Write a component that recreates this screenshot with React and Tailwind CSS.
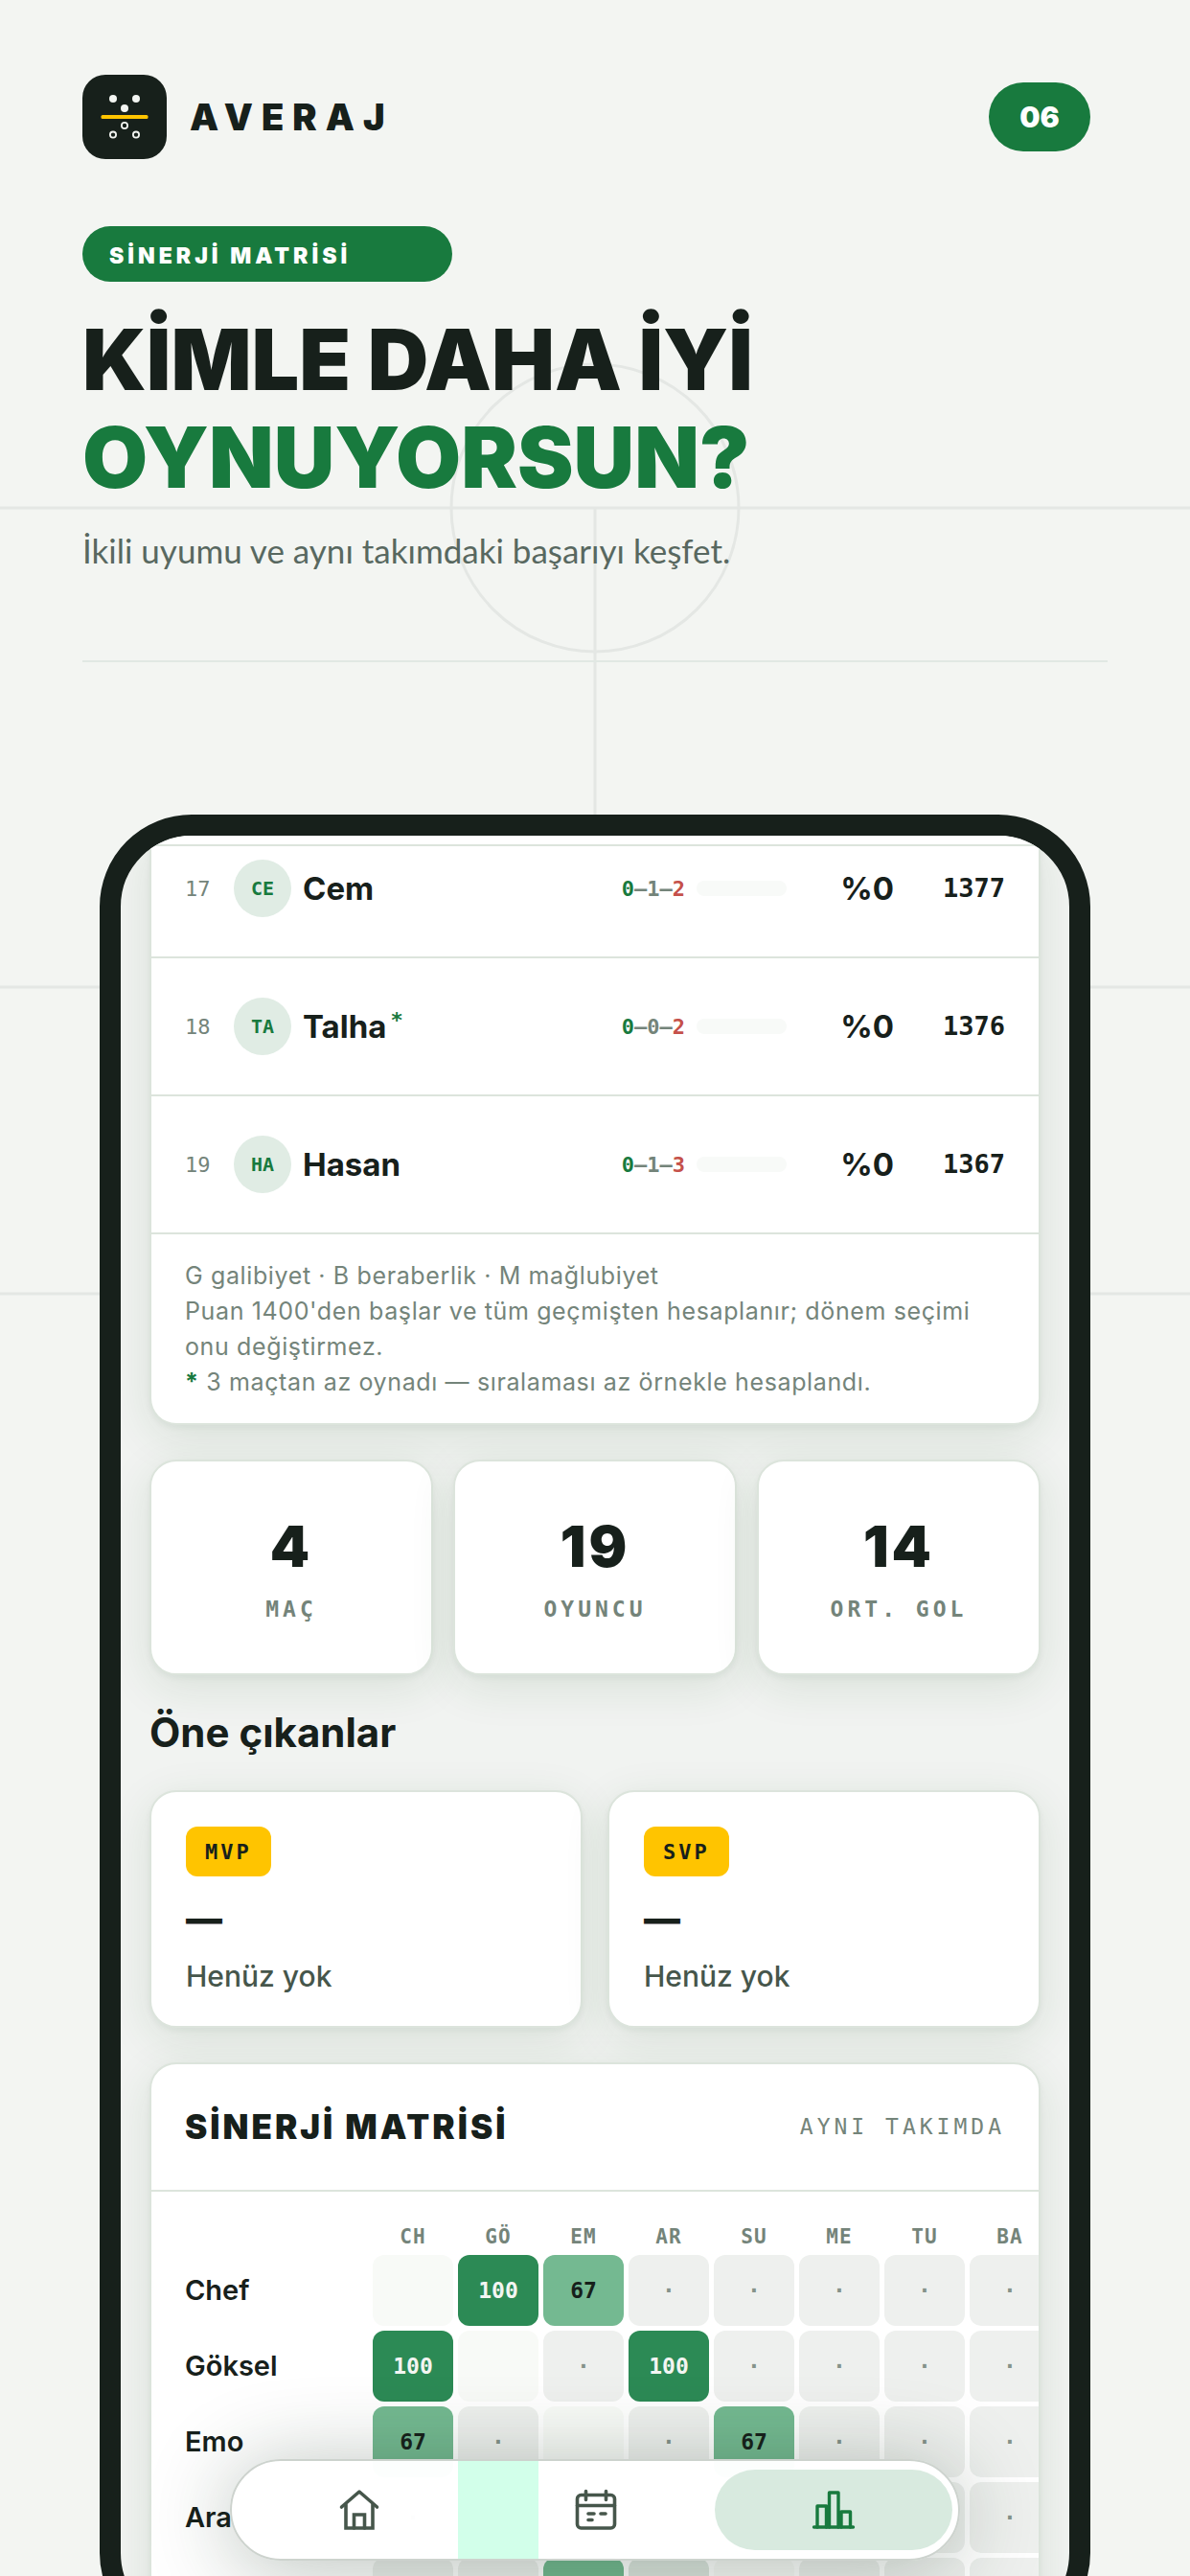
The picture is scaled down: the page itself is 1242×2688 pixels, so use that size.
import React, { useState } from 'react';
import { clsx } from 'clsx';

const players = [
  { rank: 17, code: 'CE', name: 'Cem', record: [0, 1, 2], rate: '%0', points: 1377 },
  { rank: 18, code: 'TA', name: 'Talha', few: true, record: [0, 0, 2], rate: '%0', points: 1376 },
  { rank: 19, code: 'HA', name: 'Hasan', record: [0, 1, 3], rate: '%0', points: 1367 },
];

const stats = [
  { value: '4', label: 'MAÇ' },
  { value: '19', label: 'OYUNCU' },
  { value: '14', label: 'ORT. GOL' },
];

const columns = ['CH', 'GÖ', 'EM', 'AR', 'SU', 'ME', 'TU', 'BA'];

// null = same player, 0 = never played together
const matrix = [
  { name: 'Chef', cells: [null, 100, 67, 0, 0, 0, 0, 0] },
  { name: 'Göksel', cells: [100, null, 0, 100, 0, 0, 0, 0] },
  { name: 'Emo', cells: [67, 0, null, 0, 67, 0, 0, 0] },
  { name: 'Ara', cells: [0, 100, 0, null, 0, 0, 0, 0] },
];

// tones of the row that only peeks out under the tab bar
const peekTones = [
  'bg-[#eef0ee]',
  'bg-[#eef0ee]',
  'bg-[#74b991]',
  'bg-[#dde5df]',
  'bg-[#f8faf7]',
  'bg-[#eef0ee]',
  'bg-[#eef0ee]',
  'bg-[#eef0ee]',
];

const mono = "font-['DejaVu_Sans_Mono',monospace]";
const card =
  'rounded-[28px] border-2 border-[#dce4dc] bg-white shadow-[0_3px_6px_rgba(23,60,30,0.05),0_12px_48px_rgba(23,80,30,0.11)]';

function PitchLines() {
  return (
    <svg className="absolute inset-0 h-full w-full" fill="none" stroke="#e4e7e4" strokeWidth="3" aria-hidden="true">
      <line x1="0" y1="530" x2="100%" y2="530" />
      <line x1="0" y1="1030" x2="100%" y2="1030" />
      <line x1="0" y1="1350" x2="100%" y2="1350" />
      <line x1="50%" y1="530" x2="50%" y2="1350" />
      <circle cx="50%" cy="530" r="150" />
    </svg>
  );
}

function Logo() {
  return (
    <svg viewBox="0 0 88 88" className="h-22 w-22" aria-hidden="true">
      <rect width="88" height="88" rx="24" fill="#17201b" />
      <g fill="#f3f5f2">
        <circle cx="32" cy="25" r="4" />
        <circle cx="56" cy="25" r="4" />
        <circle cx="44" cy="35" r="4" />
      </g>
      <rect x="19.5" y="42" width="49" height="4" rx="1.5" fill="#ffc400" />
      <g fill="none" stroke="#f3f5f2" strokeWidth="1.8">
        <circle cx="44" cy="53" r="3.1" />
        <circle cx="32" cy="62.6" r="3.1" />
        <circle cx="56" cy="62.6" r="3.1" />
      </g>
    </svg>
  );
}

function HomeIcon() {
  return (
    <svg viewBox="0 0 48 48" className="h-12 w-12" fill="none" stroke="currentColor" strokeWidth="3.6" strokeLinecap="round" strokeLinejoin="round">
      <path d="M5.5 21 24 5l18.5 16" />
      <path d="M10 18.5V43h28V18.5" strokeLinejoin="miter" />
      <path d="M18.5 43V29h11v14" strokeLinejoin="miter" />
    </svg>
  );
}

function CalendarIcon() {
  return (
    <svg viewBox="0 0 48 48" className="h-12 w-12" fill="none" stroke="currentColor" strokeWidth="3.6" strokeLinecap="round">
      <rect x="4.5" y="8.5" width="39" height="34.5" rx="4" />
      <path d="M4.5 19.5h39M13.5 4.5v9M34.5 4.5v9" />
      <path d="M16 28h6M29 28h5M16 34.5h4" />
    </svg>
  );
}

function StatsIcon() {
  return (
    <svg viewBox="0 0 48 48" className="h-12 w-12" fill="none" stroke="currentColor" strokeWidth="3.4" strokeLinecap="round" strokeLinejoin="round">
      <path d="M3.5 42h41" />
      <path d="M7 42V20h9.5v22M19.5 42V6H29v36M32 42V26h9.5v16" />
    </svg>
  );
}

function PlayerRow({ player, first }) {
  const [won, drawn, lost] = player.record;
  return (
    <li className={clsx('flex items-center border-b-2 border-[#dce4dc] px-[35px] pb-[41px]', first ? 'pt-[14px]' : 'pt-[41px]')}>
      <span className={clsx(mono, 'w-[51px] text-[22px] text-[#74847a]')}>{player.rank}</span>
      <span className={clsx(mono, 'flex h-15 w-15 items-center justify-center rounded-full bg-[#e0ece4] text-[20px] font-bold text-[#187a3e]')}>
        {player.code}
      </span>
      <span className="ml-3 flex-1 text-[33px] leading-10 font-bold">
        {player.name}
        {player.few && <sup className={clsx(mono, 'ml-1 text-[22px] font-bold text-[#187a3e]')}>*</sup>}
      </span>
      <span className={clsx(mono, 'text-[22px] font-bold text-[#74847a]')}>
        <span className="text-[#187a3e]">{won}</span>–{drawn}–<span className="text-[#c5514a]">{lost}</span>
      </span>
      <span className="ml-3 h-4 w-[94px] rounded-full bg-[#f8faf8]" />
      <span className="w-[112px] text-right text-[33px] leading-10 font-bold">{player.rate}</span>
      <span className={clsx(mono, 'w-[116px] text-right text-[27px] font-bold')}>{player.points}</span>
    </li>
  );
}

function Highlight({ label }) {
  return (
    <article className={clsx(card, 'px-9 pt-9 pb-[34px]')}>
      <span className={clsx(mono, 'inline-flex h-[52px] items-center rounded-xl bg-[#ffc400] px-5 text-[22px] font-bold tracking-[3px]')}>
        {label}
      </span>
      <p className="mt-4 text-[38px] leading-[56px] font-black">—</p>
      <p className="mt-[14px] text-[30px] leading-9 font-medium text-[#46564b]">Henüz yok</p>
    </article>
  );
}

function Cell({ value }) {
  return (
    <td
      className={clsx(
        mono,
        'h-[74px] rounded-xl p-0 text-center text-[23px] font-bold',
        value === null && 'bg-[#f8faf7]',
        value === 0 && 'bg-[#eef0ee] text-[#85938a]',
        value === 67 && 'bg-[#74b991]',
        value === 100 && 'bg-[#2c8a55] text-[#f3f5f2]',
      )}
    >
      {value === 0 ? '·' : value}
    </td>
  );
}

function SynergyMatrix() {
  return (
    <section className={clsx(card, 'overflow-hidden')}>
      <header className="flex h-[133px] items-center justify-between border-b-2 border-[#dce4dc] px-[35px]">
        <h2 className="text-[35px] font-black tracking-[3px]">SİNERJİ MATRİSİ</h2>
        <span className={clsx(mono, 'text-[23px] tracking-[4px] text-[#74847a]')}>AYNI TAKIMDA</span>
      </header>
      <div className="overflow-hidden pt-7 pl-[30px]">
        <table className="w-[913px] table-fixed border-separate border-spacing-[5px]">
          <thead>
            <tr>
              <th className="w-[191px] p-0" />
              {columns.map((c) => (
                <th key={c} scope="col" className={clsx(mono, 'h-7 p-0 text-[21px] leading-7 font-bold tracking-[1px] text-[#74847a]')}>
                  {c}
                </th>
              ))}
            </tr>
          </thead>
          <tbody>
            {matrix.map((row) => (
              <tr key={row.name}>
                <th scope="row" className="p-0 text-left text-[29px] font-semibold">
                  {row.name}
                </th>
                {row.cells.map((value, i) => (
                  <Cell key={columns[i]} value={value} />
                ))}
              </tr>
            ))}
            <tr aria-hidden="true">
              <td className="h-[74px] p-0" />
              {peekTones.map((tone, i) => (
                <td key={columns[i]} className={clsx('rounded-xl p-0', tone)} />
              ))}
            </tr>
          </tbody>
        </table>
      </div>
    </section>
  );
}

const tabs = [
  { id: 'home', label: 'Ana sayfa', Icon: HomeIcon },
  { id: 'matches', label: 'Maçlar', Icon: CalendarIcon },
  { id: 'stats', label: 'İstatistik', Icon: StatsIcon },
];

function TabBar() {
  const [active, setActive] = useState('stats');
  return (
    <nav className="absolute inset-x-[114px] bottom-[66px] rounded-full border-2 border-[#cdd3ce] bg-white/98 shadow-[0_8px_90px_rgba(20,45,28,0.30)]">
      {/* tint of the cell that shows through the glass */}
      <span className="absolute inset-y-0 left-[236px] w-[84px] bg-[#d2ffea]" />
      <div className="relative grid grid-cols-3 py-[9px] pr-[6px] pl-[9px]">
        {tabs.map(({ id, label, Icon }) => (
          <button
            key={id}
            type="button"
            aria-label={label}
            onClick={() => setActive(id)}
            className={clsx(
              'flex h-[84px] items-center justify-center rounded-full',
              active === id ? 'bg-[#d8eadf] text-[#187a3e]' : 'text-[#46564b]',
            )}
          >
            <Icon />
          </button>
        ))}
      </div>
    </nav>
  );
}

export default function App() {
  return (
    <main lang="tr" className="relative flex h-screen flex-col overflow-hidden bg-[#f3f5f2] font-['Inter',sans-serif] text-[#17201b]">
      <PitchLines />

      <div className="relative pt-[78px] pr-[104px] pl-[86px]">
        <header className="flex h-22 items-center justify-between">
          <div className="flex items-center gap-6">
            <Logo />
            <span className="text-[38px] font-black tracking-[9px]">AVERAJ</span>
          </div>
          <span className="flex h-18 w-[106px] items-center justify-center rounded-full bg-[#187a3e] text-[30px] font-black text-white">06</span>
        </header>

        <p className="mt-[70px] flex h-[58px] w-[386px] items-center rounded-full bg-[#187a3e] px-7 pt-1 text-[23px] font-black tracking-[4px] text-white">
          SİNERJİ MATRİSİ
        </p>
        <h1 className="mt-[30px] text-[88px] leading-[102px] font-black">
          KİMLE DAHA İYİ
          <span className="block text-[#187a3e]">OYNUYORSUN?</span>
        </h1>
        <p className="mt-[22px] font-['Lato',sans-serif] text-[35px] leading-[48px] text-[#586860]">
          İkili uyumu ve aynı takımdaki başarıyı keşfet.
        </p>
      </div>
      <hr className="relative mt-[91px] mr-[86px] ml-[86px] border-t-2 border-[#e1e8e3]" />

      {/* Phone */}
      <div className="relative mx-[104px] mt-[159px] -mb-[72px] min-h-0 flex-1 overflow-hidden rounded-[96px] border-[22px] border-[#17201b] bg-[#f1f3f1]">
        <div className="flex flex-col px-[30px]">
          <section className={clsx(card, 'rounded-t-none border-t-0')}>
            <div className="h-[11px] border-b-2 border-[#dce4dc]" />
            <ul>
              {players.map((p, i) => (
                <PlayerRow key={p.code} player={p} first={i === 0} />
              ))}
            </ul>
            <div className="px-[35px] pt-[25px] pb-6 text-[25px] leading-[37px] tracking-wide text-[#74847a]">
              <p>G galibiyet · B beraberlik · M mağlubiyet</p>
              <p>Puan 1400'den başlar ve tüm geçmişten hesaplanır; dönem seçimi onu değiştirmez.</p>
              <p>
                <b className="text-[#187a3e]">*</b> 3 maçtan az oynadı — sıralaması az örnekle hesaplandı.
              </p>
            </div>
          </section>

          <section className="mt-9 grid grid-cols-3 gap-[21px]">
            {stats.map((s) => (
              <div key={s.label} className={clsx(card, 'flex h-[225px] flex-col items-center pt-14')}>
                <span className="text-[59px] leading-[66px] font-black tracking-[3px]">{s.value}</span>
                <span className={clsx(mono, 'mt-4 text-[23px] leading-8 font-bold tracking-[4px] text-[#74847a]')}>{s.label}</span>
              </div>
            ))}
          </section>

          <h2 className="mt-8 text-[42px] leading-[56px] font-bold">Öne çıkanlar</h2>
          <section className="mt-8 grid grid-cols-2 gap-[26px]">
            <Highlight label="MVP" />
            <Highlight label="SVP" />
          </section>

          <div className="mt-9">
            <SynergyMatrix />
          </div>
        </div>
        <TabBar />
      </div>
    </main>
  );
}
